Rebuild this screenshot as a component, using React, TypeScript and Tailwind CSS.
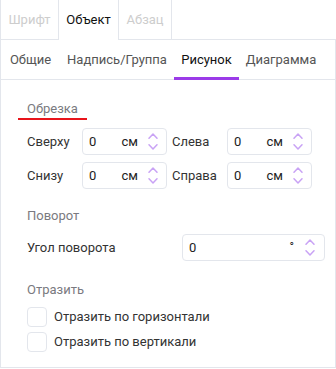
import React from "react";

function Chevrons() {
  return (
    <div className="flex flex-col items-center w-[10px] gap-[5px]">
      <svg width="10" height="6" viewBox="0 0 10 6" fill="none">
        <path d="M1 5.2 L5 1 L9 5.2" stroke="#c9a3f5" strokeWidth="1.5" strokeLinecap="round" strokeLinejoin="round" />
      </svg>
      <svg width="10" height="6" viewBox="0 0 10 6" fill="none">
        <path d="M1 0.8 L5 5 L9 0.8" stroke="#c9a3f5" strokeWidth="1.5" strokeLinecap="round" strokeLinejoin="round" />
      </svg>
    </div>
  );
}

function CropField({ label }: { label: string }) {
  return (
    <div className="flex items-center">
      <div className="w-[55px] text-[#333333]">{label}</div>
      <div className="w-[85px] h-[27px] border border-[#e3e6ec] rounded-[4px] flex items-center pl-[6px] pr-[8px]">
        <span className="flex-1 text-[#222]">0</span>
        <span className="text-[#222]">см</span>
        <div className="ml-[10px]">
          <Chevrons />
        </div>
      </div>
    </div>
  );
}

function Check({ label }: { label: string }) {
  return (
    <div className="flex items-center gap-[7px]">
      <div className="w-[20px] h-[20px] border border-[#e3e6ec] rounded-[4px] bg-white" />
      <span className="text-[#333333]">{label}</span>
    </div>
  );
}

export default function App() {
  return (
    <div
      className="w-[336px] h-[368px] flex flex-col bg-white text-[13px] leading-[18px] whitespace-nowrap"
      style={{ fontFamily: 'Roboto, "Noto Sans", sans-serif' }}
    >
      <div className="flex h-[40px] shrink-0">
        <div className="w-[59px] border-l border-r border-b border-[#e3e6ec] flex items-center justify-center text-[#cdcdcd]">
          Шрифт
        </div>
        <div className="w-[59px] flex items-center justify-center text-[#111]">Объект</div>
        <div className="w-[54px] border-l border-r border-b border-[#e3e6ec] flex items-center justify-center text-[#cdcdcd]">
          Абзац
        </div>
        <div className="flex-1 border-b border-[#e3e6ec]" />
      </div>
      <div className="flex-1 flex flex-col border-l border-r border-b border-[#e3e6ec]">
        <div className="flex h-[40px] shrink-0 border-b border-[#e3e6ec]">
          <div className="w-[59px] flex items-center justify-center text-[#555]">Общие</div>
          <div className="w-[114px] flex items-center justify-center text-[#555]">Надпись/Группа</div>
          <div className="w-[65px] flex items-center justify-center text-[#111] relative">
            Рисунок
            <div className="absolute left-0 right-0 bottom-[-1px] h-[3px] bg-[#9b3be8]" />
          </div>
          <div className="w-[84px] flex items-center justify-center text-[#555]">Диаграмма</div>
        </div>
        <div className="flex flex-col pl-[26px] pr-[10px] pt-[20px]">
          <div className="flex">
            <div className="ml-[-9px] px-[9px] border-b-2 border-[#e8141b] text-[#7a7a80]">Обрезка</div>
          </div>
          <div className="mt-[8px] flex flex-col gap-[7px]">
            <div className="flex gap-[5px]">
              <CropField label="Сверху" />
              <CropField label="Слева" />
            </div>
            <div className="flex gap-[5px]">
              <CropField label="Снизу" />
              <CropField label="Справа" />
            </div>
          </div>
          <div className="mt-[18px] text-[#7a7a80]">Поворот</div>
          <div className="mt-[9px] flex items-center">
            <div className="w-[155px] text-[#333333]">Угол поворота</div>
            <div className="w-[143px] h-[27px] border border-[#e3e6ec] rounded-[4px] flex items-center pl-[6px] pr-[9px]">
              <span className="flex-1 text-[#222]">0</span>
              <span className="text-[#222] self-start mt-[3px] text-[12px]">°</span>
              <div className="ml-[11px]">
                <Chevrons />
              </div>
            </div>
          </div>
          <div className="mt-[20px] text-[#7a7a80]">Отразить</div>
          <div className="mt-[8px] flex flex-col gap-[5px]">
            <Check label="Отразить по горизонтали" />
            <Check label="Отразить по вертикали" />
          </div>
        </div>
      </div>
    </div>
  );
}
